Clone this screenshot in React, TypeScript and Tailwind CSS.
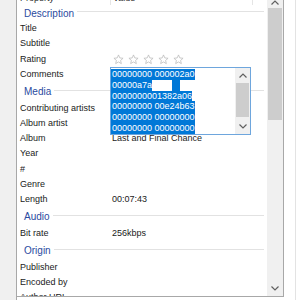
import React from "react";

type Item = [string, string];
const sections: { h: string; items: Item[] }[] = [
  { h: "Description", items: [["Title", ""], ["Subtitle", ""], ["Rating", "*stars"], ["Comments", ""]] },
  {
    h: "Media",
    items: [
      ["Contributing artists", ""],
      ["Album artist", ""],
      ["Album", "Last and Final Chance"],
      ["Year", ""],
      ["#", ""],
      ["Genre", ""],
      ["Length", "00:07:43"],
    ],
  },
  { h: "Audio", items: [["Bit rate", "256kbps"]] },
  { h: "Origin", items: [["Publisher", ""], ["Encoded by", ""], ["Author URL", ""]] },
];

function Star() {
  return (
    <svg width="11" height="11" viewBox="0 0 24 24" fill="none" stroke="#b8b8b8" strokeWidth="1.6" strokeLinejoin="round">
      <polygon points="12,2 14.9,8.6 22,9.3 16.6,14 18.2,21 12,17.3 5.8,21 7.4,14 2,9.3 9.1,8.6" />
    </svg>
  );
}

function Chevron({ up }: { up?: boolean }) {
  return (
    <svg width="8" height="5" viewBox="0 0 8 5" fill="none" stroke="#606060" strokeWidth="1.2">
      {up ? <polyline points="0.5,4.5 4,1 7.5,4.5" /> : <polyline points="0.5,0.5 4,4 7.5,0.5" />}
    </svg>
  );
}

const lines = ["00000000 000002a0", "00000a7a", "0000000001382a06", "00000000 00e24b63", "00000000 00000000", "00000000 00000000"];

export default function App() {
  return (
    <div className="w-[300px] h-[300px] overflow-hidden bg-white flex font-['Liberation_Sans',Arial,sans-serif] text-[9px] text-[#1a1a1a]">
      <div className="w-[17px] h-full bg-[#f0f0f0] border-r border-[#a8a8a8]" />
      <div className="w-[267px] h-[297px] flex border-r border-b border-[#a8a8a8]">
        <div className="w-[250px] h-full overflow-hidden relative">
          <div className="-mt-[10px] flex flex-col">
            <div className="h-[15px] flex text-[#333] pt-[2px]">
              <div className="w-[94px] border-r border-[#e5e5e5] pl-[3px] flex items-center">Property</div>
              <div className="w-[142px] border-r border-[#e5e5e5] pl-[2px] flex items-center">Value</div>
            </div>
            {sections.map((s, si) => (
              <div key={s.h} className="flex flex-col">
                <div
                  className={`${si === 0 ? "h-[16.4px]" : "h-[18.8px]"} flex items-center pl-[7px] pr-[3px] pt-[1px]`}
                >
                  <span className="text-[10px] text-[#2a4aa0] leading-none">{s.h}</span>
                  <div className="flex-1 ml-[3px] h-px bg-[#e2e2e2] -translate-y-[2px]" />
                </div>
                {s.items.map(([k, v]) => (
                  <div key={k} className="h-[15.2px] flex items-center">
                    <div className="w-[95px] pl-[3px] whitespace-nowrap">{k}</div>
                    {v === "*stars" ? (
                      <div className="flex gap-[4px] pl-[1px]">
                        <Star />
                        <Star />
                        <Star />
                        <Star />
                        <Star />
                      </div>
                    ) : (
                      <div className="whitespace-nowrap">{v}</div>
                    )}
                  </div>
                ))}
              </div>
            ))}
          </div>
          {/* Comments edit box overlay */}
          <div className="absolute left-[93px] top-[67px] w-[141px] h-[68px] bg-white border border-[#6ea6dd] flex">
            <div className="flex-1 pt-[1px] pl-0 flex flex-col">
              {lines.map((l, i) => (
                <div key={i} className="h-[10.8px] flex">
                  <span className="h-[10.8px] leading-[10.8px] bg-[#0078d7] text-white whitespace-nowrap pl-px">{l}</span>
                  {i === 1 && (
                    <>
                      <span className="w-[20px] h-[10.8px] bg-white" />
                      <span className="w-[8px] h-[10.8px] bg-[#0078d7]" />
                    </>
                  )}
                </div>
              ))}
            </div>
            <div className="w-[15px] h-full bg-[#f0f0f0] flex flex-col">
              <div className="h-[15px] flex items-center justify-center">
                <Chevron up />
              </div>
              <div className="mx-px h-[34px] bg-[#cdcdcd]" />
              <div className="flex-1" />
              <div className="h-[15px] flex items-center justify-center">
                <Chevron />
              </div>
            </div>
          </div>
        </div>
        <div className="w-[16px] h-full bg-[#f0f0f0] flex flex-col">
          <div className="h-[11px] flex items-end justify-center -mt-[3px] pb-[3px]">
            <Chevron up />
          </div>
          <div className="mx-px h-[112px] bg-[#cdcdcd]" />
          <div className="flex-1" />
          <div className="h-[16px] flex items-center justify-center">
            <Chevron />
          </div>
        </div>
      </div>
      <div className="flex-1 h-full flex">
        <div className="w-[11px]" />
        <div className="w-px h-full bg-[#e3e3e3]" />
      </div>
    </div>
  );
}
